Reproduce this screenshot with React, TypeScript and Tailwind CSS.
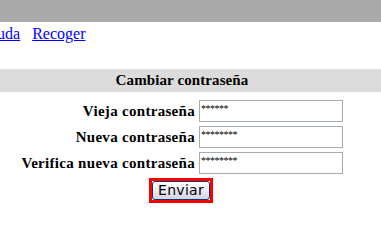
import React from "react";

const fields = [
  { label: "Vieja contraseña", value: "******" },
  { label: "Nueva contraseña", value: "********" },
  { label: "Verifica nueva contraseña", value: "********" },
];

const serif = "font-['Liberation_Serif','Times_New_Roman',serif]";

export default function App() {
  return (
    <div className={`w-[381px] h-[244px] overflow-hidden bg-white text-black ${serif}`}>
      <div className="h-[22px] bg-[#aaaaaa]" />

      <div className="mt-[3px] h-[18px] leading-[18px] text-[16px] whitespace-nowrap">
        <a href="#" className="ml-[-21px] text-[#0000ff] underline">Ayuda</a>
        <a href="#" className="ml-[12px] text-[#0000ff] underline">Recoger</a>
      </div>

      <div className="mt-[26px] h-[23px] bg-[#dcdcdc]">
        <div className="w-[364px] text-center text-[15px] font-bold leading-[23px] tracking-[0.1px]">
          Cambiar contraseña
        </div>
      </div>

      <div className="mt-[8px] grid grid-cols-[195px_144px] gap-x-[4px] gap-y-[4px]">
        {fields.map((f) => (
          <React.Fragment key={f.label}>
            <div className="h-[22px] text-right text-[15px] font-bold leading-[22px] tracking-[0.3px] whitespace-nowrap">
              {f.label}
            </div>
            <div className="h-[22px] border border-[#a5acb2] bg-white px-[1px] pt-[3px] text-[10px] leading-[10px] tracking-[-0.5px]">
              {f.value}
            </div>
          </React.Fragment>
        ))}
      </div>

      <div className="mt-[4px] ml-[149px] w-fit border-[3px] border-[#ff0000]">
        <button className="block h-[19px] w-[58px] rounded-[3px] border border-[#003c74] bg-gradient-to-b from-white to-[#d6d3e4] text-[14px] leading-[17px] tracking-[0.3px] font-['DejaVu_Sans',sans-serif]">
          Enviar
        </button>
      </div>
    </div>
  );
}
